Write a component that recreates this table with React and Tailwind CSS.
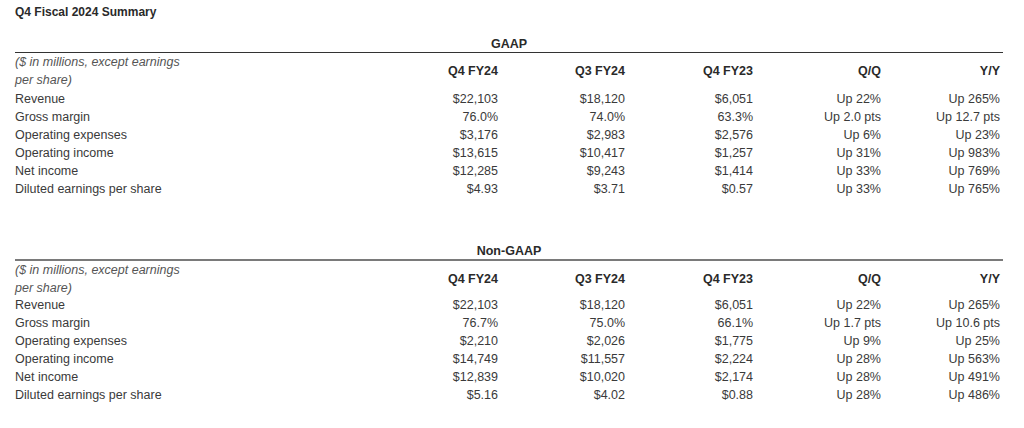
import React from 'react';

const gaap = [
  ['Revenue', '$22,103', '$18,120', '$6,051', 'Up 22%', 'Up 265%'],
  ['Gross margin', '76.0%', '74.0%', '63.3%', 'Up 2.0 pts', 'Up 12.7 pts'],
  ['Operating expenses', '$3,176', '$2,983', '$2,576', 'Up 6%', 'Up 23%'],
  ['Operating income', '$13,615', '$10,417', '$1,257', 'Up 31%', 'Up 983%'],
  ['Net income', '$12,285', '$9,243', '$1,414', 'Up 33%', 'Up 769%'],
  ['Diluted earnings per share', '$4.93', '$3.71', '$0.57', 'Up 33%', 'Up 765%'],
];

const nonGaap = [
  ['Revenue', '$22,103', '$18,120', '$6,051', 'Up 22%', 'Up 265%'],
  ['Gross margin', '76.7%', '75.0%', '66.1%', 'Up 1.7 pts', 'Up 10.6 pts'],
  ['Operating expenses', '$2,210', '$2,026', '$1,775', 'Up 9%', 'Up 25%'],
  ['Operating income', '$14,749', '$11,557', '$2,224', 'Up 28%', 'Up 563%'],
  ['Net income', '$12,839', '$10,020', '$2,174', 'Up 28%', 'Up 491%'],
  ['Diluted earnings per share', '$5.16', '$4.02', '$0.88', 'Up 28%', 'Up 486%'],
];

const cols = 'grid grid-cols-[355px_128px_127px_128px_128px_119px]';
const heads = ['Q4 FY24', 'Q3 FY24', 'Q4 FY23', 'Q/Q', 'Y/Y'];

const Table = ({ title, rows, line, gap }) => (
  <div>
    <div className={`h-[16px] leading-[16px] text-center font-semibold text-[#2a2a2a] ${line}`}>{title}</div>
    <div className={cols}>
      <div className="italic text-[#555] leading-[18px]">
        <div>($ in millions, except earnings</div>
        <div>per share)</div>
      </div>
      {heads.map((h) => (
        <div key={h} className="flex items-center justify-end font-semibold text-[#2a2a2a]">{h}</div>
      ))}
    </div>
    <div className={gap}>
      {rows.map((r) => (
        <div key={r[0]} className={`${cols} h-[18px] leading-[18px]`}>
          {r.map((c, i) => (
            <div key={i} className={i === 0 ? 'text-left' : 'text-right'}>{c}</div>
          ))}
        </div>
      ))}
    </div>
  </div>
);

export default function App() {
  return (
    <div className="w-[1024px] h-[428px] bg-white text-[#3a3a3a] text-[12.5px] font-['Liberation_Sans',Arial,sans-serif]">
      <div className="w-[1003px] pl-[15px] pt-[3px]">
        <div className="h-[18px] leading-[18px] text-[12px] font-semibold text-[#2a2a2a]">Q4 Fiscal 2024 Summary</div>
        <div className="mt-[15px]">
          <Table title="GAAP" rows={gaap} line="border-b border-[#333] box-content" gap="mt-px" />
        </div>
        <div className="mt-[45px]">
          <Table title="Non-GAAP" rows={nonGaap} line="border-b-2 border-[#7a7a7a] box-content" gap="-mt-px" />
        </div>
      </div>
    </div>
  );
}
